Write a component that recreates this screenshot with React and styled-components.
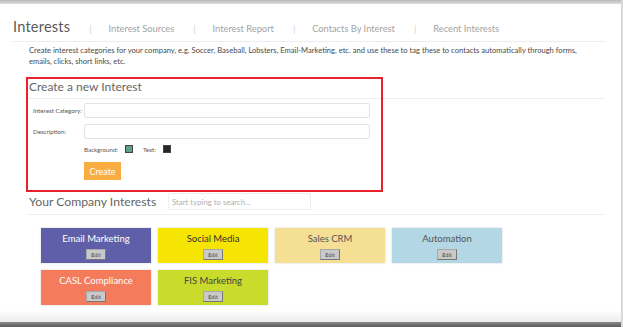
import styled, { createGlobalStyle } from "styled-components";

const GlobalStyle = createGlobalStyle`
  html, body {
    margin: 0;
    padding: 0;
    background: #ffffff;
  }
  body {
    font-family: Lato, "Open Sans", "Liberation Sans", sans-serif;
    color: #444;
  }
`;

const interests = [
  { name: "Email Marketing", bg: "#5f5fa9", fg: "#ffffff" },
  { name: "Social Media", bg: "#f6e502", fg: "#333333" },
  { name: "Sales CRM", bg: "#f5df94", fg: "#555555" },
  { name: "Automation", bg: "#b3d7e4", fg: "#555555" },
  { name: "CASL Compliance", bg: "#f47b5b", fg: "#ffffff" },
  { name: "FIS Marketing", bg: "#c9dc2c", fg: "#444444" },
];

const navItems = [
  "Interest Sources",
  "Interest Report",
  "Contacts By Interest",
  "Recent Interests",
];

const App = () => {
  return (
    <>
      <GlobalStyle />
      <Frame>
        <TopBar />
        <Page>
          <Header>
            <Title>Interests</Title>
            {navItems.map((item) => (
              <NavGroup key={item}>
                <NavSep>|</NavSep>
                <NavLink>{item}</NavLink>
              </NavGroup>
            ))}
          </Header>
          <Intro>
            Create interest categories for your company, e.g. Soccer, Baseball,
            Lobsters, Email-Marketing, etc. and use these to tag these to
            contacts automatically through forms,
            <br />
            emails, clicks, short links, etc.
          </Intro>

          <FormSection>
            <Highlight />
            <SectionTitle>Create a new Interest</SectionTitle>
            <FormBody>
              <FormRow>
                <Label>Interest Category:</Label>
                <TextInput />
              </FormRow>
              <FormRow>
                <Label>Description:</Label>
                <TextInput />
              </FormRow>
              <ColorRow>
                <SmallLabel>Background:</SmallLabel>
                <Swatch $color="#5c9f8c" />
                <SmallLabel>Text:</SmallLabel>
                <Swatch $color="#262626" />
              </ColorRow>
              <CreateButton>Create</CreateButton>
            </FormBody>
          </FormSection>

          <ListHeader>
            <ListTitle>Your Company Interests</ListTitle>
            <Search placeholder="Start typing to search..." />
          </ListHeader>

          <CardGrid>
            {interests.map((it) => (
              <Card key={it.name} $bg={it.bg} $fg={it.fg}>
                <CardName>{it.name}</CardName>
                <EditButton>Edit</EditButton>
              </Card>
            ))}
          </CardGrid>
        </Page>
        <BottomFade />
        <BottomBar />
      </Frame>
    </>
  );
};

const Frame = styled.div`
  width: 623px;
  height: 327px;
  display: flex;
  flex-direction: column;
  overflow: hidden;
  position: relative;
  border-right: 2px solid #d9d9d9;
  box-sizing: border-box;
`;

const TopBar = styled.div`
  height: 4px;
  flex: none;
  background: linear-gradient(#b9b9b9, #dedede);
`;

const Page = styled.div`
  flex: 1;
  display: flex;
  flex-direction: column;
  padding-right: 16px;
`;

const Header = styled.div`
  display: flex;
  align-items: baseline;
  height: 23px;
  margin-left: 13px;
  padding-top: 14px;
  border-bottom: 1px solid #ececec;
`;

const Title = styled.span`
  font-size: 14.6px;
  color: #5a5a5a;
  letter-spacing: 0.2px;
`;

const NavGroup = styled.span`
  display: flex;
  align-items: baseline;
`;

const NavSep = styled.span`
  font-size: 9px;
  color: #d0d0d0;
  margin: 0 17px 0 19px;
`;

const NavLink = styled.span`
  font-size: 9.3px;
  color: #a3a3a3;
`;

const Intro = styled.p`
  margin: 3px 0 0 29px;
  font-size: 7.6px;
  line-height: 11px;
  color: #4a4a4a;
`;

const FormSection = styled.div`
  position: relative;
  margin: 10px 0 0 26px;
`;

const Highlight = styled.div`
  position: absolute;
  left: 0;
  top: 0;
  width: 357px;
  height: 115px;
  border: 2px solid #e8202a;
  box-sizing: border-box;
  pointer-events: none;
`;

const SectionTitle = styled.div`
  font-size: 12px;
  line-height: 15px;
  color: #666;
  padding: 2px 0 4px 3px;
  border-bottom: 1px solid #eeeeee;
`;

const FormBody = styled.div`
  display: flex;
  flex-direction: column;
  padding: 4px 0 10px 7px;
`;

const FormRow = styled.div`
  display: flex;
  align-items: center;
  margin-bottom: 6px;
`;

const Label = styled.label`
  width: 51px;
  font-size: 6.2px;
  color: #555;
`;

const TextInput = styled.input`
  width: 286px;
  height: 15px;
  box-sizing: border-box;
  border: 1px solid #e3e3e3;
  border-radius: 2px;
  background: #fff;
`;

const ColorRow = styled.div`
  display: flex;
  align-items: center;
  margin: 0 0 0 51px;
`;

const SmallLabel = styled.span`
  font-size: 6.2px;
  color: #555;
  margin-right: 7px;
`;

const Swatch = styled.span`
  width: 8px;
  height: 8px;
  background: ${(p) => p.$color};
  border: 1px solid #444;
  box-sizing: border-box;
  margin-right: 10px;
`;

const CreateButton = styled.button`
  align-self: flex-start;
  margin: 9px 0 0 51px;
  width: 37px;
  height: 18px;
  padding: 0;
  border: none;
  background: #f9ad40;
  color: #fff;
  font-family: Lato, "Open Sans", sans-serif;
  font-size: 9px;
`;

const ListHeader = styled.div`
  display: flex;
  align-items: center;
  margin: 3px 0 0 27px;
  padding: 0 0 4px 2px;
  border-bottom: 1px solid #eeeeee;
`;

const ListTitle = styled.span`
  font-size: 12.2px;
  color: #666;
  width: 139px;
`;

const Search = styled.input`
  width: 143px;
  height: 17px;
  box-sizing: border-box;
  border: 1px solid #eeeeee;
  border-radius: 2px;
  font-family: Lato, "Open Sans", sans-serif;
  font-size: 7.8px;
  padding: 0 3px;
  &::placeholder {
    color: #b0b0b0;
  }
`;

const CardGrid = styled.div`
  display: grid;
  grid-template-columns: repeat(4, 110px);
  grid-auto-rows: 35px;
  gap: 7px;
  margin: 13px 0 0 41px;
`;

const Card = styled.div`
  background: ${(p) => p.$bg};
  color: ${(p) => p.$fg};
  display: flex;
  flex-direction: column;
  align-items: center;
  padding-top: 5px;
  gap: 4px;
  box-sizing: border-box;
  box-shadow: 0 0 2px rgba(0, 0, 0, 0.18);
`;

const CardName = styled.div`
  font-size: 9.5px;
  line-height: 12px;
`;

const EditButton = styled.button`
  width: 20px;
  height: 11px;
  padding: 0;
  background: #c9c9c9;
  border: 1px solid #a8a8a8;
  border-right-color: #777;
  border-bottom-color: #777;
  font-family: "DejaVu Sans", sans-serif;
  font-size: 5px;
  color: #333;
`;

const BottomFade = styled.div`
  height: 12px;
  flex: none;
  background: linear-gradient(#ffffff, #ececec);
`;

const BottomBar = styled.div`
  height: 5px;
  flex: none;
  background: linear-gradient(#8a8a8a, #5b5b5b);
`;

export default App;
